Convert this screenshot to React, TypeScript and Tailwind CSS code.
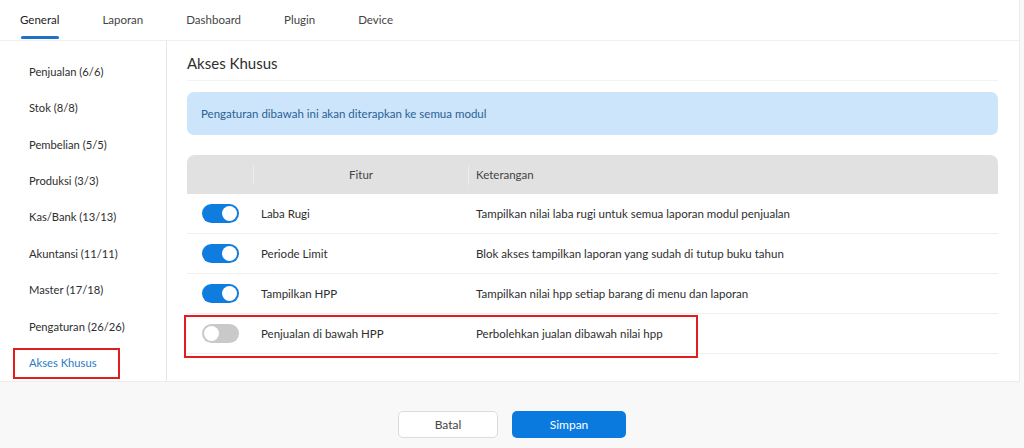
const tabs = ["General", "Laporan", "Dashboard", "Plugin", "Device"];

const menu = [
  "Penjualan (6/6)",
  "Stok (8/8)",
  "Pembelian (5/5)",
  "Produksi (3/3)",
  "Kas/Bank (13/13)",
  "Akuntansi (11/11)",
  "Master (17/18)",
  "Pengaturan (26/26)",
];

const rows = [
  { name: "Laba Rugi", desc: "Tampilkan nilai laba rugi untuk semua laporan modul penjualan", on: true },
  { name: "Periode Limit", desc: "Blok akses tampilkan laporan yang sudah di tutup buku tahun", on: true },
  { name: "Tampilkan HPP", desc: "Tampilkan nilai hpp setiap barang di menu dan laporan", on: true },
  { name: "Penjualan di bawah HPP", desc: "Perbolehkan jualan dibawah nilai hpp", on: false, marked: true },
];

function Toggle({ on }: { on: boolean }) {
  return (
    <div
      className={`w-[37px] h-[19px] rounded-full p-[2px] flex items-center ${
        on ? "bg-[#0f7ddf] justify-end" : "bg-[#c9c9c9] justify-start"
      }`}
    >
      <div className="w-[15px] h-[15px] rounded-full bg-white" />
    </div>
  );
}

export default function App() {
  return (
    <div
      className="w-[1024px] h-[448px] bg-[#f8f8f8] text-[#2e2e2e] overflow-hidden"
      style={{ fontFamily: "Lato, 'Noto Sans', sans-serif" }}
    >
      <div className="w-[1020px] h-[382px] bg-white border-r border-b border-[#ececec]">
        {/* tabs */}
        <div className="h-[41px] border-b border-[#efefef] flex gap-[43px] pl-[20px] text-[11.5px]">
          {tabs.map((t, i) => (
            <div
              key={t}
              className={`relative flex items-center ${i === 0 ? "text-[#222]" : "text-[#444]"}`}
            >
              {t}
              {i === 0 && (
                <div className="absolute left-[1px] right-0 bottom-[1px] h-[3px] rounded-full bg-[#1f72c4]" />
              )}
            </div>
          ))}
        </div>

        <div className="flex h-[340px]">
          {/* sidebar */}
          <div className="w-[167px] border-r border-[#e6e6e6] pt-[13px] text-[11.2px]">
            {menu.map((m) => (
              <div key={m} className="h-[36.4px] flex items-center pl-[29px]">
                {m}
              </div>
            ))}
            <div className="h-[36.4px] flex items-center">
              <div className="ml-[13px] w-[107px] h-[31px] border-2 border-[#e21d1d] flex items-center pl-[14px] text-[#2a7cc6]">
                Akses Khusus
              </div>
            </div>
          </div>

          {/* main */}
          <div className="flex-1 pl-[20px] pr-[21px]">
            <div className="h-[40px] pt-[13px] border-b border-[#f3f3f3] text-[15px] leading-[18px]">
              Akses Khusus
            </div>

            <div className="mt-[11px] h-[43px] rounded-[7px] bg-[#cce5fb] flex items-center pl-[14px] text-[11.5px] text-[#2b5f95]">
              Pengaturan dibawah ini akan diterapkan ke semua modul
            </div>

            <div className="mt-[20px] text-[11.5px]">
              <div className="h-[39px] rounded-t-[8px] bg-[#e1e1e1] flex items-center text-[#444]">
                <div className="w-[67px] h-[20px] border-r border-[#ededed]" />
                <div className="w-[215px] h-[20px] border-r border-[#ededed] flex items-center justify-center">
                  Fitur
                </div>
                <div className="pl-[7px]">Keterangan</div>
              </div>
              {rows.map((r) => (
                <div key={r.name} className="relative h-[40px] border-b border-[#efefef] flex items-center">
                  <div className="w-[67px] pl-[15px]">
                    <Toggle on={r.on} />
                  </div>
                  <div className="w-[215px] pl-[7px]">{r.name}</div>
                  <div className="pl-[7px]">{r.desc}</div>
                  {r.marked && (
                    <div className="absolute left-[-3px] top-[1px] w-[514px] h-[43px] border-2 border-[#e21d1d]" />
                  )}
                </div>
              ))}
            </div>
          </div>
        </div>
      </div>

      {/* footer */}
      <div className="flex justify-center gap-[14px] pt-[29px] text-[12px]">
        <button className="w-[100px] h-[27px] rounded-[5px] bg-white border border-[#dcdcdc] text-[#444]">
          Batal
        </button>
        <button className="w-[114px] h-[27px] rounded-[5px] bg-[#0b7ade] text-white">Simpan</button>
      </div>
    </div>
  );
}
